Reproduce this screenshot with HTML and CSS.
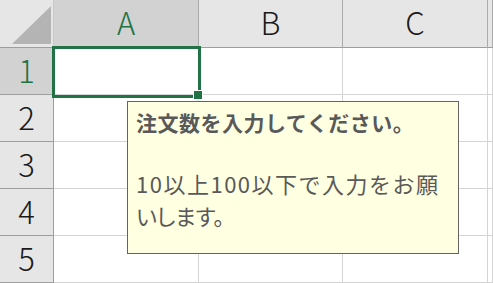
FILE: index.html
```html
<!DOCTYPE html>
<html lang="ja">
<head>
<meta charset="utf-8">
<link rel="stylesheet" href="styles.css">
</head>
<body>
<div class="sheet">
  <div class="cell hdr corner"><span class="tri"></span></div>
  <div class="cell hdr col sel">A</div>
  <div class="cell hdr col">B</div>
  <div class="cell hdr col">C</div>
  <div class="cell hdr col"></div>

  <div class="cell hdr row sel">1</div>
  <div class="cell"></div><div class="cell"></div><div class="cell"></div><div class="cell"></div>
  <div class="cell hdr row">2</div>
  <div class="cell"></div><div class="cell"></div><div class="cell"></div><div class="cell"></div>
  <div class="cell hdr row">3</div>
  <div class="cell"></div><div class="cell"></div><div class="cell"></div><div class="cell"></div>
  <div class="cell hdr row">4</div>
  <div class="cell"></div><div class="cell"></div><div class="cell"></div><div class="cell"></div>
  <div class="cell hdr row">5</div>
  <div class="cell"></div><div class="cell"></div><div class="cell"></div><div class="cell"></div>

  <div class="selection"><span class="handle"></span></div>
  <div class="tip">
    <div class="tip-title">注文数を入力してください。</div>
    <div class="tip-body">
      <div class="wide">10以上100以下で入力をお願</div>
      <div class="tight">いします。</div>
    </div>
  </div>
</div>
</body>
</html>
```

FILE: styles.css
```css
html, body {
  margin: 0;
  padding: 0;
  background: #ffffff;
  overflow: hidden;
}

.sheet {
  position: relative;
  width: 493px;
  height: 283px;
  display: grid;
  grid-template-columns: 54px 145px 144px 145px 1fr;
  grid-template-rows: 48px repeat(5, 47px);
  font-family: "Noto Sans CJK JP", "Noto Sans", sans-serif;
  overflow: hidden;
}

.cell {
  box-sizing: border-box;
  border-right: 1px solid #d4d4d4;
  border-bottom: 1px solid #d4d4d4;
  background: #ffffff;
}

.hdr {
  background: #e6e6e6;
  color: #1a1a1a;
  font-size: 31px;
  font-weight: 300;
  display: flex;
  align-items: center;
  justify-content: center;
}

.hdr.col {
  border-right: 1px solid #ababab;
  border-bottom: 1px solid #9e9e9e;
  padding-bottom: 5px;
}

.hdr.row {
  border-right: 1px solid #9e9e9e;
  border-bottom: 1px solid #9e9e9e;
  padding-bottom: 4px;
}

.hdr.sel {
  background: #d2d2d2;
  color: #217346;
}

.corner {
  position: relative;
  border-right: 1px solid #c8c8c8;
  border-bottom: 1px solid #9e9e9e;
}

.tri {
  position: absolute;
  left: 12px;
  top: 6px;
  width: 39px;
  height: 38px;
  background: #b4b4b4;
  clip-path: polygon(100% 0, 100% 100%, 0 100%);
}

.selection {
  position: absolute;
  left: 52px;
  top: 46px;
  width: 149px;
  height: 52px;
  box-sizing: border-box;
  border: 3px solid #217346;
}

.handle {
  position: absolute;
  right: -4px;
  bottom: -4px;
  width: 8px;
  height: 8px;
  background: #217346;
  box-shadow: 0 0 0 1px #ffffff;
}

.tip {
  position: absolute;
  left: 127px;
  top: 101px;
  width: 332px;
  height: 153px;
  box-sizing: border-box;
  border: 1px solid #646464;
  background: #ffffe1;
  color: #595959;
  padding: 5px 8px 0 8px;
}

.tip-title {
  font-size: 21px;
  font-weight: 700;
  line-height: 30px;
  letter-spacing: 0.5px;
  white-space: nowrap;
}

.tip-body {
  margin-top: 30px;
  font-size: 22px;
  line-height: 32px;
}

.wide {
  letter-spacing: 1.5px;
  white-space: nowrap;
}

.tight {
  font-feature-settings: "palt";
  white-space: nowrap;
}
```
